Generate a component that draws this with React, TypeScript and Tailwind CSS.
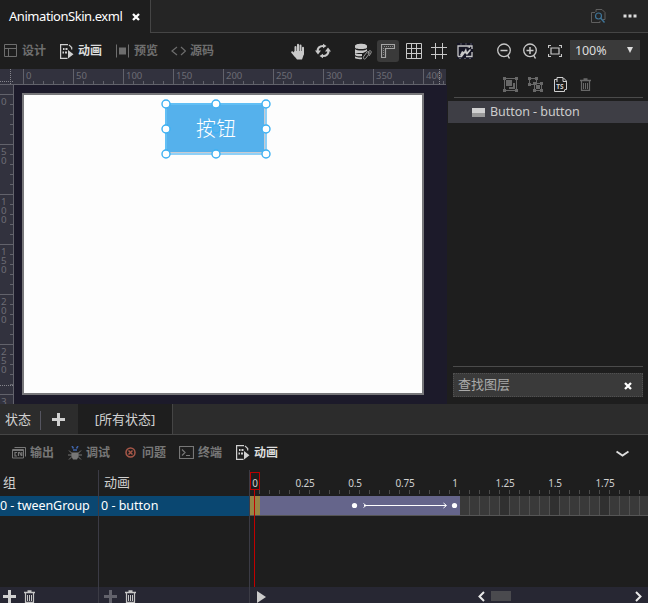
import type { ReactNode } from 'react';

const TICKS = [1, 2, 3, 4];
const H_MARKS = [0, 50, 100, 150, 200, 250, 300, 350, 400];
const V_MARKS = ['0', '50', '100', '150', '200', '250', '3'];
const TIMES = ['0', '0.25', '0.5', '0.75', '1', '1.25', '1.5', '1.75'];
const HANDLES = [
  [0, 0], [50, 0], [100, 0], [0, 25], [50, 25], [100, 25], [0, 50], [50, 50], [100, 50],
];

function Svg({ w = 14, h = 14, className = '', children }: { w?: number; h?: number; className?: string; children: ReactNode }) {
  return (
    <svg width={w} height={h} viewBox={`0 0 ${w} ${h}`} className={`block shrink-0 ${className}`} fill="none" stroke="currentColor">
      {children}
    </svg>
  );
}

function AnimIcon() {
  return (
    <Svg w={14} h={15} className="text-[#d0d0d0]">
      <path d="M7.500 14.300H.6V.6H8M9 .8l2.700 2.700v2" strokeWidth="1.200" />
      <path d="M3 4h1.500v2H3zM5.500 4h2v2h-2zM2.500 7.500H4v2H2.500zM5 7.500h2v2H5zM8 6l5.500 4.300L8 14.600z" fill="currentColor" stroke="none" />
    </Svg>
  );
}

function Cross({ size = 8, className = '' }: { size?: number; className?: string }) {
  return (
    <Svg w={size} h={size} className={className}>
      <path d={`M1 1l${size - 2} ${size - 2}M${size - 1} 1L1 ${size - 1}`} strokeWidth="2.300" />
    </Svg>
  );
}

function Trash({ w = 11, h = 13, className = '' }: { w?: number; h?: number; className?: string }) {
  return (
    <svg width={w} height={h} viewBox="0 0 11 13" className={`block shrink-0 ${className}`} fill="none" stroke="currentColor">
      <path d="M0 2.500h11M3.500 1h4" strokeWidth="1.500" />
      <path d="M1.500 3v9.400h8V3" strokeWidth="1.200" />
      <path d="M3.500 5v6M5.500 5v6M7.500 5v6" />
    </svg>
  );
}

function Plus({ size = 13, className = '' }: { size?: number; className?: string }) {
  const c = size / 2;
  return (
    <Svg w={size} h={size} className={className}>
      <path d={`M${c} 0v${size}M0 ${c}h${size}`} strokeWidth="3" />
    </Svg>
  );
}

function TopTabs() {
  return (
    <div className="flex h-[33px] shrink-0">
      <div className="flex w-[150px] items-center bg-[#1e1e1e] pl-[9px] text-[13px] text-white">
        <span className="w-[123px] whitespace-nowrap tracking-[-0.450px]">AnimationSkin.exml</span>
        <Cross className="text-white" />
      </div>
      <div className="flex flex-1 items-center justify-end border-b border-l border-[#454545] bg-[#252525] pr-[11px]">
        <Svg w={15} h={15} className="mr-[17px] text-[#5f5f5f]">
          <path d="M4 3.500H.5v10H9V12M5 3V.5h6l3 3v7h-2" />
          <circle cx="7.500" cy="7" r="3" stroke="#3f7599" strokeWidth="1.200" />
          <path d="M9.500 9l4 4.500" stroke="#3f7599" strokeWidth="1.400" />
        </Svg>
        <Svg w={14} h={4} className="text-[#dddddd]">
          <path d="M.5 .5h3v3h-3zM5.500 .5h3v3h-3zM10.500 .5h3v3h-3z" fill="currentColor" stroke="none" />
        </Svg>
      </div>
    </div>
  );
}

function Mode({ icon, label, className }: { icon: ReactNode; label: string; className: string }) {
  return (
    <div className={`flex shrink-0 items-center gap-[4px] whitespace-nowrap text-[12px] leading-[16px] font-bold ${className}`}>
      {icon}
      <span>{label}</span>
    </div>
  );
}

function Toolbar() {
  return (
    <div className="flex h-[36px] shrink-0 items-center bg-[#1e1e1e] pl-[4px] text-[#c8c8c8]">
      <Mode className="w-[56px] text-[#6e6e6e]" label="设计" icon={<Svg><path d="M.5 .5h12v12H.5zM.5 4.500h12M4.500 4.500v8" /></Svg>} />
      <Mode className="w-[56px] text-[#dddddd]" label="动画" icon={<AnimIcon />} />
      <Mode className="w-[55px] text-[#6e6e6e]" label="预览" icon={<Svg><path d="M.5 .5v13M12.500 .5v13" /><path d="M3 3.500h7v7H3z" fill="currentColor" stroke="none" /></Svg>} />
      <Mode className="w-[120px] text-[#6e6e6e]" label="源码" icon={<Svg w={15} h={14}><path d="M6 3L1 7l5 4M10 3l4.500 4L10 11" strokeWidth="1.200" /></Svg>} />
      <Svg w={14} h={17} className="mr-[10px]">
        <path d="M1.200 9.200l3.500 3.800M4.500 4v7M7 1.800V11M9.500 2.400V11M12 4.800v6" strokeWidth="2" strokeLinecap="round" />
        <path d="M3.500 8H13v3l-2 5.500H6l-4-5z" fill="currentColor" stroke="none" />
      </Svg>
      <Svg w={16} h={16}>
        <path d="M2.700 9C2 5.500 4.500 2.800 8.500 3M13.300 7c.7 3.500-1.800 6.200-5.800 6" strokeWidth="2.200" />
        <path d="M0 7.500h6L3 11.500zM10 8.500h6l-3-4zM8 .8v4.500L11.500 3zM8 15.200v-4.500L4.500 13z" fill="currentColor" stroke="none" />
      </Svg>
      <Svg w={17} h={17} className="ml-[24px]">
        <path d="M0 3c0-3 12-3 12 0v1.500c0 2-12 2-12 0zM0 6c2 2 10 2 12 0v2L8 10H0zM0 10c1 1 6 1 7 1v2c-2 .5-6 .5-7-1zM0 13.500c2 1 5 1 7 1V16c-2 .5-7 0-7-1z" fill="currentColor" stroke="none" />
        <path d="M9 13l3-4c1-1 3 0 2 2l-3 4c-1 2-4 1-2-2zM13 11l1-3c1-1 3 0 2 2l-2 3" stroke="#999999" />
      </Svg>
      <div className="ml-[5px] flex size-[22px] items-center justify-center rounded-[3px] bg-[#3a3a3a]">
        <Svg w={14} h={14} className="text-[#a5a5a5]">
          <path d="M.5 .5h13v4h-9v9h-4z" strokeWidth="1.200" />
          <path d="M3 2.500h9M2.500 4v8" stroke="#888888" strokeDasharray="1 1" />
        </Svg>
      </div>
      <Svg w={16} h={16} className="ml-[7px]"><path d="M.5 .5h15v15H.5zM5.500 0v16M10.500 0v16M0 5.500h16M0 10.500h16" /></Svg>
      <Svg w={16} h={16} className="ml-[9px]"><path d="M4.500 0v16M11.500 0v16M0 4.500h16M0 11.500h16" /></Svg>
      <Svg w={16} h={16} className="ml-[10px]">
        <path d="M0 0h16v16H0z" fill="#151524" stroke="none" />
        <path d="M1 13.500V3h14v3M15 9v4.500H9M1 13.500h4" strokeWidth="1.300" />
        <path d="M3 12l2-4 2 1 2-4 1 4 3-3 1 1-4 5-2-2-3 4zM10 4l3-1v2z" fill="currentColor" stroke="none" />
        <path d="M3 1h2M8 1h2M13 1h2M2 15.500h2M7 15.500h2M12 15.500h2" stroke="#55555f" />
      </Svg>
      <Svg w={15} h={16} className="ml-[24px]"><circle cx="7" cy="7.300" r="6.300" strokeWidth="1.300" /><path d="M3.500 7.500h7M10.500 12l2 3.500" strokeWidth="1.500" /></Svg>
      <Svg w={15} h={16} className="ml-[11px]"><circle cx="7" cy="7.300" r="6.300" strokeWidth="1.300" /><path d="M3.500 7.500h7M7 4v7M10.500 12l2 3.500" strokeWidth="1.500" /></Svg>
      <Svg w={14} h={12} className="ml-[10px]"><path d="M3 3h8v6H3zM.5 3V.5H3M11 .5h2.500V3M13.500 9v2.500H11M3 11.500H.5V9" strokeWidth="1.200" /></Svg>
      <div className="ml-[8px] mt-[-2px] flex h-5 w-[70px] items-center justify-between bg-[#3a3a3a] pr-[7px] pl-[5px] text-[12.500px] text-[#dddddd]">
        <span className="mt-[2px] tracking-[-0.100px]">100%</span>
        <Svg w={6} h={6}><path d="M0 0h6L3 6z" fill="currentColor" stroke="none" /></Svg>
      </div>
    </div>
  );
}

function Stage() {
  return (
    <div className="flex w-[448px] shrink-0 flex-col bg-[#1e1e1e] text-[9.500px] leading-[9px] text-[#6d6d75]">
      <div className="relative flex h-[16px] w-[446px] shrink-0 overflow-hidden border-b border-[#62626b] bg-[#32323e] pl-[23px]">
        {H_MARKS.map((n) => (
          <div key={n} className="relative flex h-full w-[50px] shrink-0 items-end border-l border-[#62626b]">
            {TICKS.map((t) => <i key={t} className="ml-[9px] h-[3px] w-px bg-[#62626b]" />)}
            <span className="absolute top-[2px] left-[2px]">{n}</span>
          </div>
        ))}
        <i className="absolute top-0 left-[10px] h-full border-l border-dotted border-[#85858c]" />
        <i className="absolute top-[12px] left-0 w-[13px] border-t border-dotted border-[#85858c]" />
        <i className="absolute top-0 left-[439px] h-full border-l border-dotted border-[#85858c]" />
      </div>
      <div className="flex min-h-0 flex-1">
        <div className="relative flex w-[14px] shrink-0 flex-col overflow-hidden border-r border-[#62626b] bg-[#32323e] pt-[9px]">
          {V_MARKS.map((n) => (
            <div key={n} className="relative flex h-[50px] shrink-0 flex-col items-end border-t border-[#62626b] last:h-[10px]">
              {TICKS.map((t) => <i key={t} className="mt-[9px] h-px w-[3px] bg-[#62626b]" />)}
              <span className="absolute top-[2px] left-[1px] w-[6px] text-[9.800px] break-all">{n}</span>
            </div>
          ))}
          <i className="absolute top-[300px] left-0 w-full border-t border-dotted border-[#85858c]" />
        </div>
        <div className="w-[433px] bg-[#1c1a2a] pt-[8px] pl-[8px]">
          <div className="h-[302px] w-[402px] border-2 border-[#77777a] bg-[#fdfdfd] pt-[8px] pl-[141px]">
            <div className="relative flex h-[52px] w-[102px] items-center justify-center border-2 border-[#8fd0f7] border-t-[#62bff5] border-l-[#62bff5] bg-[#55b1ec] shadow-[inset_-1px_-1px_0_#c9cbd2]">
              <span className="text-[20px] leading-5 font-light text-white">按钮</span>
              <svg className="absolute top-[-7px] left-[-7px]" width="112" height="62" viewBox="-6 -6 112 62">
                {HANDLES.map(([x, y]) => (
                  <circle key={`${x}-${y}`} cx={x} cy={y} r="4" strokeWidth="1.400" stroke="#3cb0f2" fill={x === 50 && y === 25 ? '#55b1ec' : '#ffffff'} />
                ))}
              </svg>
            </div>
          </div>
        </div>
      </div>
    </div>
  );
}

function Layers() {
  return (
    <div className="flex flex-1 flex-col bg-[#1e1e1e] text-[13px]">
      <div className="mr-[5px] ml-[6px] flex h-[29px] shrink-0 items-center border-b border-[#4b4b4b] pt-[2px] pl-[49px] text-[#686868]">
        <Svg w={15} h={15}><path d="M1.500 1.500h12v12h-12z" /><path d="M0 0h3v3H0zM12 0h3v3h-3zM0 12h3v3H0zM12 12h3v3h-3zM3 3h6v6H3zM6 10h4V6h2v6H6z" fill="currentColor" stroke="none" /></Svg>
        <Svg w={15} h={15} className="ml-[10px]"><path d="M1.500 1.500h7v6h-7zM6.500 6.500h7v7h-7z" /><path d="M0 0h3v3H0zM7 0h3v3H7zM0 6h3v3H0zM5 5h3v3H5zM12 5h3v3h-3zM5 12h3v3H5zM12 12h3v3h-3zM8 8h4v4H8z" fill="currentColor" stroke="none" /></Svg>
        <Svg w={14} h={15} className="ml-[11px] text-[#d0d0d0]">
          <path d="M3 2.500H.5v12h10v-1.500M3 5V.5h6l3.500 3.500v8.500h-2M9 1v3.500h3" />
          <text x="2.200" y="12" fontSize="6.500" fontWeight="700" fill="currentColor" stroke="none">TS</text>
        </Svg>
        <Trash className="ml-[12px]" />
      </div>
      <div className="mt-[3px] flex h-[22px] shrink-0 items-center bg-[#3e3e45] pl-[24px] text-[#cccccc]">
        <span className="mr-[5px] h-[9px] w-[13px] border-b-4 border-[#999999] bg-[#d0d0d0]" />
        <span className="mt-px text-[12.500px] tracking-[-0.050px]">Button - button</span>
      </div>
      <div className="mt-auto mr-[5px] mb-[7px] ml-[5px] border-t border-[#4b4b4b] pt-[6px]">
        <div className="flex h-[24px] items-center justify-between border border-dotted border-[#505050] bg-[#3a3a3a] pr-[10px] pl-[4px] text-[13px] text-[#aaaaaa]">
          <span>查找图层</span>
          <Cross className="mt-[2px] text-white" />
        </div>
      </div>
    </div>
  );
}

function StateBar() {
  return (
    <div className="flex h-[31px] shrink-0 items-center border-b border-[#454545] bg-[#2c2c2c] text-[13px] text-[#d0d0d0]">
      <span className="mt-[2px] w-[40px] pl-[5px]">状态</span>
      <i className="mt-[2px] h-[19px] w-px bg-[#555560]" />
      <Plus className="mt-px ml-[11px] text-[#d0d0d0]" />
      <div className="ml-[13px] flex h-full w-[95px] items-center justify-center border-r border-[#454545] bg-[#1e1e1e] pt-px">[所有状态]</div>
    </div>
  );
}

function OutputTabs() {
  return (
    <div className="flex h-[35px] shrink-0 items-center bg-[#1e1e1e] pl-[12px] text-[#777777]">
      <Mode className="w-[56px]" label="输出" icon={<Svg w={14} h={12}><path d="M2.500 .5h11v9M.5 2.500h11v8.500H.5zM.5 3.500h11" /><path d="M5 5.500H3v3.500h2M6.500 5v4M7.500 5l2 4M9.800 5v4" strokeWidth="1.200" /></Svg>} />
      <Mode className="w-[57px]" label="调试" icon={<Svg><path d="M3.500 6.500h7v4L9 13.500H5l-1.500-3z" fill="currentColor" stroke="none" /><path d="M1 4.500l3 3M13 4.500l-3 3M0 9h14M1 13.500l3-3M13 13.500l-3-3" /><path d="M4 0l1.500 2.500M10 0L8.500 2.500M5 4h4" stroke="#3f63a8" strokeWidth="1.500" /></Svg>} />
      <Mode className="w-[54px] [&>svg]:mr-[2px]" label="问题" icon={<Svg w={11} h={11}><circle cx="5.500" cy="5.500" r="4.500" stroke="#a75748" strokeWidth="1.500" /><path d="M3.500 3.500l4 4M7.500 3.500l-4 4" stroke="#a75748" strokeWidth="1.500" /></Svg>} />
      <Mode className="w-[57px]" label="终端" icon={<Svg w={15} h={13}><path d="M.5 .5h14v12H.5zM3 3.500l3 3-3 3M7 9.500h4" strokeWidth="1.200" /></Svg>} />
      <Mode className="text-[#dddddd]" label="动画" icon={<AnimIcon />} />
      <Svg w={13} h={8} className="mt-[2px] mr-[19px] ml-auto text-[#dddddd]"><path d="M.5 1.500l6 4 6-4" strokeWidth="2" /></Svg>
    </div>
  );
}

function Timeline() {
  return (
    <div className="relative flex flex-1 bg-[#1e1e1e] text-[13px] text-[#d0d0d0]">
      <div className="flex w-[99px] shrink-0 flex-col border-r border-[#3b3b45]">
        <div className="flex h-[26px] items-center pl-[3px]">组</div>
        <div className="flex h-[20px] items-center bg-[#0a4771] pt-px text-[12.500px] tracking-[-0.080px] whitespace-nowrap text-white">0 - tweenGroup</div>
        <div className="mt-auto flex h-[16px] items-center bg-[#272733] pt-[3px] pl-[3px]"><Plus className="text-[#d0d0d0]" /><Trash className="ml-[8px] text-[#c5c5c5]" /></div>
      </div>
      <div className="flex w-[151px] shrink-0 flex-col border-r border-[#3b3b45]">
        <div className="flex h-[26px] items-center pl-[5px]">动画</div>
        <div className="flex h-[20px] items-center bg-[#0a4771] pt-px pl-[2px] text-[12.500px] text-white">0 - button</div>
        <div className="mt-auto flex h-[16px] items-center bg-[#272733] pt-[3px] pl-[5px]"><Plus className="text-[#62626b]" /><Trash className="ml-[8px] text-[#c5c5c5]" /></div>
      </div>
      <div className="flex min-w-0 flex-1 flex-col">
        <div className="flex h-[26px] shrink-0 flex-col overflow-hidden">
          <div className="-ml-[20px] flex h-[20px] pt-[5px] text-[10px] leading-[16px] tracking-[-0.200px]">
            {TIMES.map((t) => <span key={t} className="w-[50px] shrink-0 text-center">{t}</span>)}
          </div>
          <div className="flex h-[4px]">
            {Array.from({ length: 39 }, (_, i) => <i key={i} className="ml-[9px] w-px shrink-0 bg-[#4b4b4b]" />)}
          </div>
        </div>
        <div className="flex h-[20px] shrink-0 overflow-hidden border-b border-[#555555]">
          <div className="w-[10px] shrink-0 bg-[#978546]" />
          <div className="w-[200px] shrink-0 bg-[#65658b] text-white">
            <Svg w={200} h={19}>
              <circle cx="94.500" cy="9.500" r="2.600" fill="currentColor" stroke="none" />
              <circle cx="194.500" cy="9.500" r="2.600" fill="currentColor" stroke="none" />
              <path d="M104 9.500h82M103.500 7.500l2.500 2-2.500 2M183.500 7l3 2.500-3 2.500" />
            </Svg>
          </div>
          {Array.from({ length: 19 }, (_, i) => (
            <div key={i} className={`w-[10px] shrink-0 border-r border-[#505050] ${i % 5 === 4 ? 'bg-[#303030]' : 'bg-[#393939]'}`} />
          ))}
        </div>
        <div className="mt-auto flex h-[16px] shrink-0 items-center bg-[#272733] pt-[3px] pl-[7px]">
          <Svg w={10} h={12} className="text-[#cccccc]"><path d="M0 0l9 6-9 6z" fill="currentColor" stroke="none" /></Svg>
          <Svg w={7} h={11} className="ml-[211px] text-[#e8e8e8]"><path d="M6 1L1.500 5.500 6 10" strokeWidth="2" /></Svg>
          <div className="ml-[6px] mt-[-2px] h-[10px] w-[20px] bg-[#4a4a4e]" />
          <Svg w={7} h={11} className="mr-[6px] ml-auto text-[#e8e8e8]"><path d="M1 1l4.500 4.500L1 10" strokeWidth="2" /></Svg>
        </div>
      </div>
      <i className="absolute top-[2px] left-[250px] h-[18px] w-[10px] border border-[#bb0000]" />
      <i className="absolute top-[20px] bottom-[16px] left-[254px] w-px bg-[#c00000]" />
    </div>
  );
}

export default function App() {
  return (
    <main className="flex h-[603px] w-[648px] flex-col overflow-hidden bg-[#1e1e1e] font-['Noto_Sans','Noto_Sans_CJK_SC',sans-serif]">
      <TopTabs />
      <Toolbar />
      <div className="flex h-[335px] shrink-0">
        <Stage />
        <Layers />
      </div>
      <StateBar />
      <OutputTabs />
      <Timeline />
    </main>
  );
}
